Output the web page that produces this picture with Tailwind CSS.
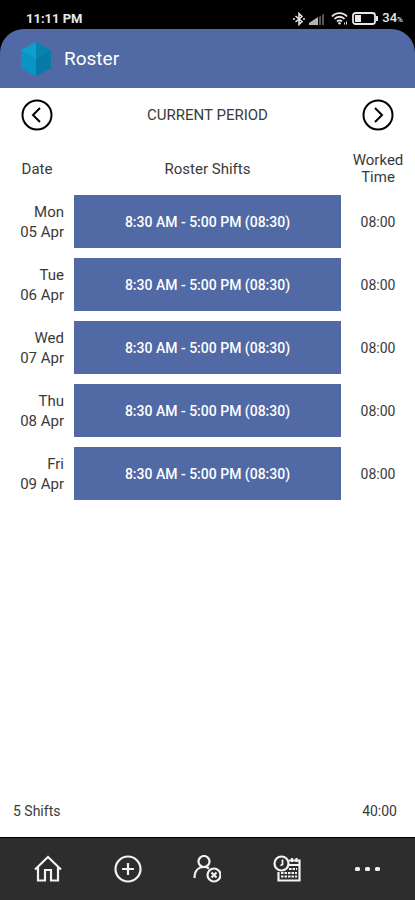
<!DOCTYPE html>
<html lang="en">
<head>
  <meta charset="UTF-8" />
  <meta name="viewport" content="width=device-width, initial-scale=1.0" />
  <title>Roster</title>
  <script src="https://cdn.jsdelivr.net/npm/@tailwindcss/browser@4"></script>
</head>
<body class="bg-white text-[#3a3a3a] font-[Roboto,sans-serif] text-[15px] leading-5 min-h-screen flex flex-col">

  <!-- Status bar + app header -->
  <header class="bg-black">
    <div class="h-[29px] pt-2 pl-[26px] pr-3 flex items-center justify-between text-[#e8e8e8]">
      <span class="text-[13px] leading-5 font-bold">11:11 PM</span>
      <div class="flex items-center">
        <svg class="w-3 h-3.5 mr-1" viewBox="0 0 12 14" fill="none" stroke="currentColor" stroke-width="1.5">
          <path d="M2.5 4l6.500 5.500L6 12.500v-11L9 4.500 2.500 10" />
          <path d="M0 7h2M10 7h2" />
        </svg>
        <svg class="w-4 h-3 mr-1.5" viewBox="0 0 16 12">
          <path d="M0 12v-2l9-6v8z" fill="#b5b5b5" />
          <path d="M10 12V4l2-1.500V12zM13 12V2l2-1.500V12z" fill="#555" />
        </svg>
        <svg class="w-[17px] h-[13px] mr-1" viewBox="0 0 17 13" fill="none" stroke="currentColor" stroke-width="1.8">
          <path d="M1 4.500C5 0 12 0 16 4.500M3.500 7c2.500-3 7.500-3 10 0M6 9.500c1.500-1.500 3.500-1.500 5 0" />
          <circle cx="8.500" cy="11.200" r="1.200" fill="currentColor" stroke="none" />
          <path d="M13.500 12.500v-2M15.500 12.500v-3" stroke-width="1" />
        </svg>
        <svg class="w-[26px] h-[13px] mr-1" viewBox="0 0 26 13" fill="none" stroke="currentColor" stroke-width="1.8">
          <rect x="1" y="1" width="22" height="11" rx="2.5" />
          <rect x="3" y="3" width="6" height="7" fill="currentColor" stroke="none" />
          <path d="M25 4v5" stroke-width="2" />
        </svg>
        <span class="text-[13px] leading-5 font-medium">34<span class="text-[8px]">%</span></span>
      </div>
    </div>
    <div class="h-[59px] px-5 flex items-center gap-3 bg-[#5169a5] rounded-t-3xl">
      <svg class="w-8 h-9" viewBox="0 0 32 36">
        <path d="M16 1L1 9v18l15 8z" fill="#0c9fd0" />
        <path d="M16 1l15 8v18l-15 8z" fill="#0883b0" />
        <path d="M1 9l15 9v17L1 27z" fill="#0a94c4" />
        <path d="M31 9l-15 9v17l15-8z" fill="#077aa5" />
      </svg>
      <h1 class="text-[19px] text-white">Roster</h1>
    </div>
  </header>

  <main class="flex-1 flex flex-col">
    <!-- Period switcher -->
    <div class="px-[21px] pt-[11px] flex items-center justify-between">
      <button type="button" aria-label="Previous period" class="text-black">
        <svg class="w-8 h-8" viewBox="0 0 32 32" fill="none" stroke="currentColor" stroke-width="2">
          <circle cx="16" cy="16" r="14.500" />
          <path d="M19 9l-7 7 7 7" />
        </svg>
      </button>
      <h2>CURRENT PERIOD</h2>
      <button type="button" aria-label="Next period" class="text-black">
        <svg class="w-8 h-8" viewBox="0 0 32 32" fill="none" stroke="currentColor" stroke-width="2">
          <circle cx="16" cy="16" r="14.500" />
          <path d="M13 9l7 7-7 7" />
        </svg>
      </button>
    </div>

    <table class="w-full mt-4 table-fixed">
      <thead>
        <tr class="h-[43px]">
          <th scope="col" class="w-[74px] font-normal">Date</th>
          <th scope="col" class="font-normal">Roster Shifts</th>
          <th scope="col" class="w-[74px] font-normal leading-[17px]">Worked<br>Time</th>
        </tr>
      </thead>
      <tbody class="text-sm">
        <tr>
          <th scope="row" class="pr-2.5 text-right text-[15px] leading-5 font-normal">Mon<br>05 Apr</th>
          <td class="py-[5px]"><div class="h-[53px] flex items-center justify-center bg-[#5169a5] text-white font-medium">8:30 AM - 5:00 PM (08:30)</div></td>
          <td class="text-center">08:00</td>
        </tr>
        <tr>
          <th scope="row" class="pr-2.5 text-right text-[15px] leading-5 font-normal">Tue<br>06 Apr</th>
          <td class="py-[5px]"><div class="h-[53px] flex items-center justify-center bg-[#5169a5] text-white font-medium">8:30 AM - 5:00 PM (08:30)</div></td>
          <td class="text-center">08:00</td>
        </tr>
        <tr>
          <th scope="row" class="pr-2.5 text-right text-[15px] leading-5 font-normal">Wed<br>07 Apr</th>
          <td class="py-[5px]"><div class="h-[53px] flex items-center justify-center bg-[#5169a5] text-white font-medium">8:30 AM - 5:00 PM (08:30)</div></td>
          <td class="text-center">08:00</td>
        </tr>
        <tr>
          <th scope="row" class="pr-2.5 text-right text-[15px] leading-5 font-normal">Thu<br>08 Apr</th>
          <td class="py-[5px]"><div class="h-[53px] flex items-center justify-center bg-[#5169a5] text-white font-medium">8:30 AM - 5:00 PM (08:30)</div></td>
          <td class="text-center">08:00</td>
        </tr>
        <tr>
          <th scope="row" class="pr-2.5 text-right text-[15px] leading-5 font-normal">Fri<br>09 Apr</th>
          <td class="py-[5px]"><div class="h-[53px] flex items-center justify-center bg-[#5169a5] text-white font-medium">8:30 AM - 5:00 PM (08:30)</div></td>
          <td class="text-center">08:00</td>
        </tr>
      </tbody>
    </table>

    <!-- Totals -->
    <div class="mt-auto pl-[13px] pr-[18px] pb-4 flex justify-between text-sm">
      <span>5 Shifts</span>
      <span>40:00</span>
    </div>
  </main>

  <!-- Bottom navigation -->
  <nav class="h-[63px] px-2 grid grid-cols-5 place-items-center bg-[#2d2d2d] border-t border-black text-[#f2f2f2]">
    <a href="#" aria-label="Home">
      <svg class="w-7 h-7" viewBox="0 0 28 28" fill="none" stroke="currentColor" stroke-width="2.2">
        <path d="M1 14.500L14 2l13 12.500" />
        <path d="M4 12v13.500h7V15h6v10.500h7V12" />
      </svg>
    </a>
    <a href="#" aria-label="Add">
      <svg class="w-7 h-7" viewBox="0 0 28 28" fill="none" stroke="currentColor" stroke-width="2.2">
        <circle cx="14" cy="14" r="12.500" />
        <path d="M14 8v12M8 14h12" />
      </svg>
    </a>
    <a href="#" aria-label="Absences">
      <svg class="w-7 h-7" viewBox="0 0 28 28" fill="none" stroke="currentColor" stroke-width="2.2">
        <circle cx="11" cy="6.500" r="5.500" />
        <path d="M1.500 23c0-6.500 3.500-11 9.500-11 2 0 3.500.5 5 1.500" />
        <circle cx="21" cy="20" r="6.500" />
        <path d="M18.500 17.500l5 5M23.500 17.500l-5 5" />
      </svg>
    </a>
    <a href="#" aria-label="Timesheet">
      <svg class="w-7 h-7" viewBox="0 0 28 28" fill="none" stroke="currentColor" stroke-width="2.2">
        <circle cx="8.500" cy="8.500" r="7" />
        <path d="M9.500 4.500v5l-2 1" stroke-width="1.800" />
        <path d="M5.500 17v8.500h21V5.500H16M16 10h10M19 3v4M23.500 3v4" />
        <path d="M8 21.500h16M8 18h16M16 14h8" stroke-dasharray="2.500 1" />
      </svg>
    </a>
    <a href="#" aria-label="More">
      <svg class="w-7 h-7" viewBox="0 0 28 28" fill="currentColor">
        <rect x="2" y="12" width="5" height="4" rx="1.500" />
        <rect x="12" y="12" width="5" height="4" rx="1.500" />
        <rect x="22" y="12" width="5" height="4" rx="1.500" />
      </svg>
    </a>
  </nav>

</body>
</html>
